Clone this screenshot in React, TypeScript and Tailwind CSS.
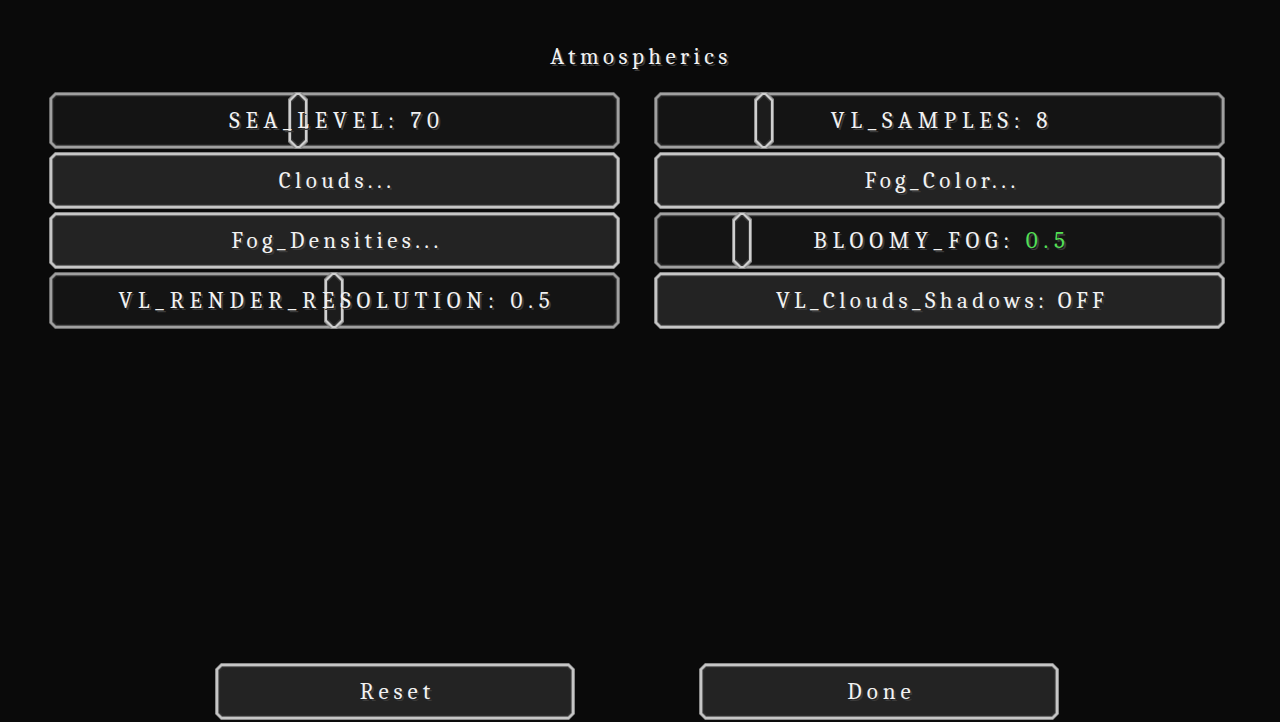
import React from "react";

const C6 =
  "[clip-path:polygon(6px_0,calc(100%_-_6px)_0,100%_6px,100%_calc(100%_-_6px),calc(100%_-_6px)_100%,6px_100%,0_calc(100%_-_6px),0_6px)]";
const C5 =
  "[clip-path:polygon(5px_0,calc(100%_-_5px)_0,100%_5px,100%_calc(100%_-_5px),calc(100%_-_5px)_100%,5px_100%,0_calc(100%_-_5px),0_5px)]";
const C4 =
  "[clip-path:polygon(4px_0,calc(100%_-_4px)_0,100%_4px,100%_calc(100%_-_4px),calc(100%_-_4px)_100%,4px_100%,0_calc(100%_-_4px),0_4px)]";
const C3 =
  "[clip-path:polygon(3px_0,calc(100%_-_3px)_0,100%_3px,100%_calc(100%_-_3px),calc(100%_-_3px)_100%,3px_100%,0_calc(100%_-_3px),0_3px)]";
const K7 =
  "[clip-path:polygon(7px_0,calc(100%_-_7px)_0,100%_7px,100%_calc(100%_-_7px),calc(100%_-_7px)_100%,7px_100%,0_calc(100%_-_7px),0_7px)]";
const K6 =
  "[clip-path:polygon(6px_0,calc(100%_-_6px)_0,100%_6px,100%_calc(100%_-_6px),calc(100%_-_6px)_100%,6px_100%,0_calc(100%_-_6px),0_6px)]";

const font = "font-serif";
const shadow = "[text-shadow:2px_2px_0_#3a3a3a]";

const TR_CAPS = "tracking-[5.8px]";
const TR_MIX = "tracking-[4.4px]";
const TR_BTN = "tracking-[5px]";

function Label({ children, tr }: { children: React.ReactNode; tr: string }) {
  return (
    <div
      className={`relative z-10 flex h-full w-full items-center justify-center text-[23px] leading-none text-[#f2f2f2] ${tr} ${font} ${shadow}`}
    >
      <span className="pl-[5px]">{children}</span>
    </div>
  );
}

function Frame({ light }: { light: boolean }) {
  return (
    <div className={`h-full w-full p-px ${light ? "bg-[#8a8a8a]" : "bg-[#6a6a6a]"} ${C6}`}>
      <div className={`h-full w-full p-[2px] ${light ? "bg-[#c6c6c6]" : "bg-[#a0a0a0]"} ${C5}`}>
        <div className={`h-full w-full p-px ${light ? "bg-[#6e6e6e]" : "bg-[#555555]"} ${C4}`}>
          <div className={`h-full w-full p-px ${light ? "bg-[#2c2c2c]" : "bg-[#222222]"} ${C3}`}>
            <div className={`h-full w-full ${light ? "bg-[#232323]" : "bg-[#141414]"} ${C3}`} />
          </div>
        </div>
      </div>
    </div>
  );
}

function Button({
  children,
  w = "w-full",
  tr = TR_MIX,
}: {
  children: React.ReactNode;
  w?: string;
  tr?: string;
}) {
  return (
    <div className={`relative h-[57px] ${w}`}>
      <Frame light />
      <div className="absolute inset-0">
        <Label tr={tr}>{children}</Label>
      </div>
    </div>
  );
}

function Slider({
  children,
  knob,
  tr = TR_CAPS,
}: {
  children: React.ReactNode;
  knob: number;
  tr?: string;
}) {
  return (
    <div className="relative h-[57px] w-full">
      <Frame light={false} />
      <div className="absolute top-0 h-[57px] w-[20px]" style={{ left: knob }}>
        <div className={`h-full w-full bg-[#8c8c8c] p-px ${K7}`}>
          <div className={`h-full w-full bg-[#cfcfcf] p-[2px] ${K7}`}>
            <div className={`h-full w-full bg-[#3a3a3a] p-px ${K6}`}>
              <div className={`h-full w-full bg-[#1c1c1c] ${K6}`} />
            </div>
          </div>
        </div>
      </div>
      <div className="absolute inset-0">
        <Label tr={tr}>{children}</Label>
      </div>
    </div>
  );
}

export default function App() {
  return (
    <div className="flex h-[722px] w-[1280px] flex-col overflow-hidden bg-[#0a0a0a]">
      <div
        className={`mt-[40px] flex h-[32px] items-center justify-center text-[23px] leading-none tracking-[4.4px] text-[#f2f2f2] ${font} ${shadow}`}
      >
        <span className="pl-[2px]">Atmospherics</span>
      </div>
      <div className="ml-[49px] mt-[20px] grid grid-cols-[571px_571px] gap-x-[34px] gap-y-[3px]">
        <Slider knob={239}>SEA_LEVEL: 70</Slider>
        <Slider knob={100}>VL_SAMPLES: 8</Slider>
        <Button>Clouds...</Button>
        <Button>Fog_Color...</Button>
        <Button>Fog_Densities...</Button>
        <Slider knob={78}>
          BLOOMY_FOG: <span className="text-[#55e055]">0.5</span>
        </Slider>
        <Slider knob={275}>VL_RENDER_RESOLUTION: 0.5</Slider>
        <Button>VL_Clouds_Shadows: OFF</Button>
      </div>
      <div className="flex-1" />
      <div className="mb-[2px] ml-[215px] flex gap-[124px]">
        <Button w="w-[360px]" tr={TR_BTN}>
          Reset
        </Button>
        <Button w="w-[360px]" tr={TR_BTN}>
          Done
        </Button>
      </div>
    </div>
  );
}
